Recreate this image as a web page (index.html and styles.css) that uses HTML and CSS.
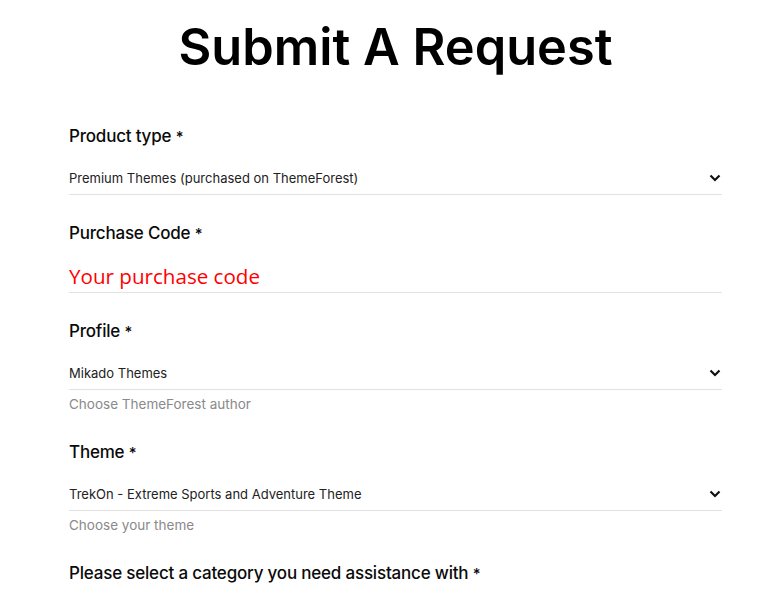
FILE: index.html
```html
<!DOCTYPE html>
<html lang="en">
<head>
    <meta charset="UTF-8">
    <meta name="viewport" content="width=device-width, initial-scale=1.0">
    <title>Submit A Request</title>
    <link rel="stylesheet" href="styles.css">
</head>
<body>
    <div class="page">
        <h1>Submit A Request</h1>

        <form class="request-form">
            <!-- Product type -->
            <div class="field">
                <label>Product type <span class="req">*</span></label>
                <div class="select">
                    <span>Premium Themes (purchased on ThemeForest)</span>
                    <svg class="chevron" width="12" height="8" viewBox="0 0 12 8"><path d="M1.5 1.5 L6 6 L10.5 1.5" fill="none" stroke="#111" stroke-width="2.2"/></svg>
                </div>
            </div>

            <!-- Purchase code -->
            <div class="field">
                <label for="code">Purchase Code <span class="req">*</span></label>
                <input type="text" id="code" class="text-input" placeholder="Your purchase code">
            </div>

            <!-- Profile -->
            <div class="field">
                <label>Profile <span class="req">*</span></label>
                <div class="select">
                    <span>Mikado Themes</span>
                    <svg class="chevron" width="12" height="8" viewBox="0 0 12 8"><path d="M1.5 1.5 L6 6 L10.5 1.5" fill="none" stroke="#111" stroke-width="2.2"/></svg>
                </div>
                <p class="help">Choose ThemeForest author</p>
            </div>

            <!-- Theme -->
            <div class="field">
                <label>Theme <span class="req">*</span></label>
                <div class="select">
                    <span>TrekOn - Extreme Sports and Adventure Theme</span>
                    <svg class="chevron" width="12" height="8" viewBox="0 0 12 8"><path d="M1.5 1.5 L6 6 L10.5 1.5" fill="none" stroke="#111" stroke-width="2.2"/></svg>
                </div>
                <p class="help">Choose your theme</p>
            </div>

            <div class="field">
                <label>Please select a category you need assistance with <span class="req">*</span></label>
            </div>
        </form>
    </div>
</body>
</html>
```

FILE: styles.css
```css
body {
    margin: 0;
    font-family: Inter, "Noto Sans", sans-serif;
    color: #111;
    background: #fff;
}
.page {
    padding: 0 52px 0 69px;
}
h1 {
    margin: 15px 0 0;
    font-size: 50.5px;
    line-height: 64px;
    font-weight: 600;
    text-align: center;
    color: #000;
}
.request-form {
    padding-top: 45px;
}
.field {
    margin-bottom: 26px;
}
label {
    display: block;
    font-size: 17px;
    line-height: 24px;
    font-weight: 500;
    margin-bottom: 13px;
    color: #0a0a0a;
    letter-spacing: -0.2px;
}
.req {
    font-size: 15px;
}
.select {
    display: flex;
    align-items: center;
    justify-content: space-between;
    height: 32px;
    border-bottom: 1px solid #e2e2e2;
    font-size: 13px;
    color: #222;
}
.chevron {
    margin-right: 1px;
}
.text-input {
    display: block;
    width: 100%;
    height: 33px;
    padding: 0;
    border: none;
    border-bottom: 1px solid #e2e2e2;
    outline: none;
    font-family: "Open Sans", sans-serif;
    font-size: 20.6px;
}
.text-input::placeholder {
    color: #ff0000;
}
.help {
    margin: 4px 0 0;
    font-size: 13.5px;
    line-height: 20px;
    color: #8a8a8a;
}
```
